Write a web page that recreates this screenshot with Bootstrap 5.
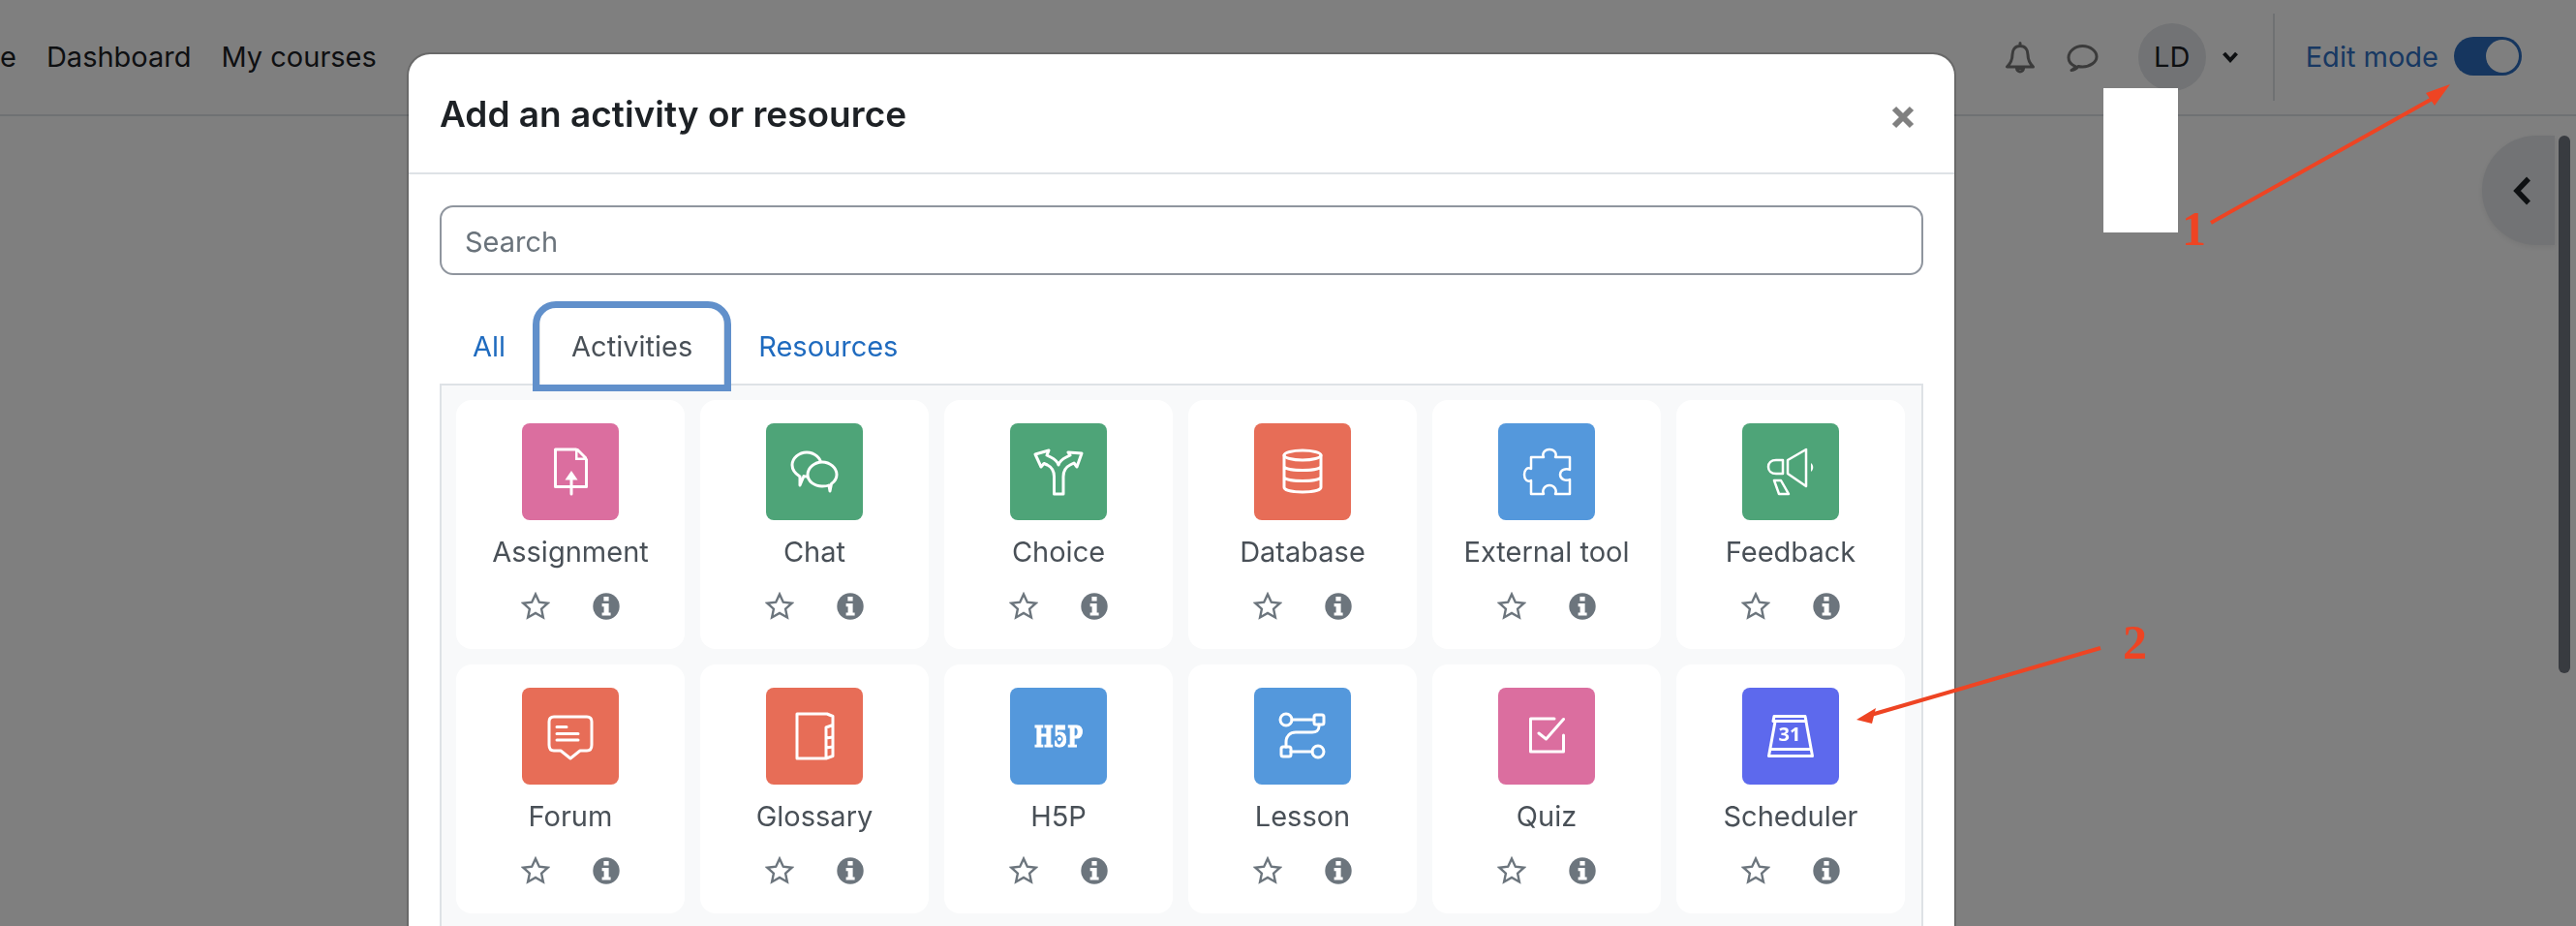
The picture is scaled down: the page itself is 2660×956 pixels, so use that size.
<!DOCTYPE html>
<html lang="en">
<head>
  <meta charset="UTF-8">
  <title>Add an activity or resource</title>
  <link href="https://cdn.jsdelivr.net/npm/bootstrap@5.3.0/dist/css/bootstrap.min.css" rel="stylesheet">
  <style>
    body {
      font-family: Inter, "Liberation Sans", sans-serif;
      font-size: 29px;
      color: #1d2125;
      background: #fff;
      overflow: hidden;
      height: 956px;
    }
    .top-bar {
      height: 120px;
      border-bottom: 2px solid #dee2e6;
    }
    .top-link { color: #1d2125; text-decoration: none; margin-right: 31px; }
    .top-tools { margin-right: 56px; }
    .top-icon { display: block; }
    .chat-icon { margin-left: 33px; }
    .user-pic {
      width: 70px;
      height: 70px;
      margin-left: 41px;
      border-radius: 50%;
      background: #e4e7ea;
    }
    .caret-icon { margin-left: 17px; }
    .bar-sep { width: 2px; height: 90px; margin-left: 36px; background: #dee2e6; }
    .edit-label { color: #3071c4; margin-left: 32px; }
    .edit-switch { margin-left: 16px; }
    .form-switch .edit-toggle {
      width: 70px;
      height: 40px;
      margin: 0;
      float: none;
      border: 0;
      background-color: #2c6cbe;
      background-image: url("data:image/svg+xml,%3csvg xmlns='http://www.w3.org/2000/svg' viewBox='-4 -4 8 8'%3e%3ccircle r='3.4' fill='%23fff'/%3e%3c/svg%3e");
    }
    .drawer-tab {
      position: absolute;
      left: 2563px;
      top: 140px;
      width: 75px;
      height: 113px;
      padding-left: 6px;
      background: #e4e7ea;
      border-radius: 56px 0 0 56px;
      box-shadow: 0 2px 6px rgba(0, 0, 0, .08);
    }
    .modal.d-block { overflow: hidden; }
    .add-dialog {
      width: 1600px;
      max-width: none;
      margin: 54px 0 0 420px;
    }
    .add-dialog .modal-content {
      border-width: 2px;
      border-radius: 24px;
    }
    .add-dialog .modal-header {
      height: 124px;
      padding: 0 32px;
      border-bottom: 2px solid #dee2e6;
    }
    .add-title { font-size: 37px; font-weight: 600; line-height: 1.2; margin: 2px 0 0; color: #1d2125; }
    .x-btn { border: 0; background: none; padding: 0; line-height: 0; margin: 7px 9px 0 0; }
    .add-dialog .modal-body { padding: 32px; height: 900px; }
    .search-box.form-control {
      height: 72px;
      border: 2px solid #8f959e;
      border-radius: 14px;
      font-size: 29px;
      padding: 2px 24px 0;
    }
    .search-box::placeholder { color: #6a737b; }
    .add-tabs { margin-top: 31px; border-bottom: 2px solid #dee2e6; padding-left: 0; }
    .add-tabs .nav-link {
      color: #1f6bbf;
      border: 2px solid transparent;
      border-bottom: 0;
      border-radius: 14px 14px 0 0;
      padding: 20px 32px 17px;
      line-height: 42px;
      margin: 0;
    }
    .add-tabs .nav-link.active { color: #495057; border-color: #dee2e6; background: #fff; margin-bottom: -2px; padding-bottom: 19px; }
    .add-pane {
      background: #f8f9fa;
      border: 2px solid #dee2e6;
      border-top: 0;
      padding: 15px 16px 16px 15px;
      display: grid;
      grid-template-columns: repeat(6, 236px);
      gap: 16px;
    }
    .mod-card {
      height: 257px;
      background: #fff;
      border-radius: 16px;
      padding-top: 24px;
      text-align: center;
    }
    .mod-tile {
      width: 100px;
      height: 100px;
      border-radius: 8px;
      margin: 0 auto;
      display: block;
    }
    .tile-pink { background: #db6e9f; }
    .tile-green { background: #4ea478; }
    .tile-red { background: #e76d57; }
    .tile-blue { background: #5498dc; }
    .tile-indigo { background: #5d69ed; }
    .mod-name { color: #495057; line-height: 42px; margin-top: 12px; }
    .mod-actions { margin-top: 20px; gap: 44px; height: 30px; }
    .line-w { fill: none; stroke: #fff; stroke-width: 3; stroke-linejoin: round; stroke-linecap: round; }
    .line-w.on-green { fill: #4ea478; }
    .line-w.thin { stroke-width: 2.5; }
    .marks {
      position: absolute;
      left: 0;
      top: 0;
      width: 2660px;
      height: 956px;
      z-index: 1060;
      pointer-events: none;
    }
    .mark-num { font-family: "Liberation Serif", serif; font-weight: 700; font-size: 50px; fill: #ee4423; }
    .redact {
      position: absolute;
      left: 2172px;
      top: 91px;
      width: 77px;
      height: 149px;
      background: #fff;
      z-index: 1060;
    }
    .tab-ring {
      position: absolute;
      left: 550px;
      top: 311px;
      width: 205px;
      height: 93px;
      border: 7px solid #6190cb;
      border-radius: 24px 24px 0 0;
      z-index: 1060;
    }
    .fake-scroll {
      position: absolute;
      left: 2642px;
      top: 140px;
      width: 12px;
      height: 555px;
      border-radius: 6px;
      background: #383b40;
      z-index: 1060;
    }
  </style>
</head>
<body>
  <svg width="0" height="0" class="d-block">
    <symbol id="ic-star" viewBox="0 0 30 30">
      <path d="M15 2.500l3.800 8.200 8.900 1-6.600 6 1.800 8.800-7.900-4.500-7.900 4.500 1.800-8.800-6.600-6 8.900-1z" fill="none" stroke="#6c757d" stroke-width="2.400"/>
    </symbol>
    <symbol id="ic-info" viewBox="0 0 28 28">
      <circle cx="14" cy="14" r="13.700" fill="#6c757d"/>
      <path d="M11.400 4h5.200v4.600h-5.200zM9.600 11h7v9.400h2v3.200H9.600v-3.200h2v-6.200h-2z" fill="#fff"/>
    </symbol>
  </svg>

  <!-- page under the backdrop -->
  <nav class="top-bar d-flex align-items-center">
    <a class="top-link" href="#">e</a>
    <a class="top-link" href="#">Dashboard</a>
    <a class="top-link" href="#">My courses</a>
    <div class="top-tools d-flex align-items-center ms-auto">
      <svg class="top-icon" width="30" height="33" viewBox="0 0 30 33"><path d="M15 1.500v3M15 4.500c-5.500 0-8 4-8 9 0 6-2 9-5.500 12.500h27C25 22.500 23 19.500 23 13.500c0-5-2.500-9-8-9zM11.500 27.500a3.500 3.500 0 0 0 7 0z" fill="none" stroke="#777" stroke-width="3" stroke-linejoin="round" stroke-linecap="round"/></svg>
      <svg class="top-icon chat-icon" width="33" height="29" viewBox="0 0 33 29"><path d="M5 27.500c2-1 3.500-2.500 4-4C4.500 21.500 2 18.500 2 14.500 2 8 8.500 2.500 16.500 2.500S31 8 31 13.500 24.500 24 16.500 24c-2 0-3 0-4.500-.5-1.500 2-4 3.500-7 4z" fill="none" stroke="#777" stroke-width="3" stroke-linejoin="round"/></svg>
      <div class="user-pic d-flex align-items-center justify-content-center">LD</div>
      <svg class="top-icon caret-icon" width="16" height="12" viewBox="0 0 16 12"><path d="M1.500 2l6.500 7 6.500-7" fill="none" stroke="#1d2125" stroke-width="4"/></svg>
      <div class="bar-sep"></div>
      <span class="edit-label">Edit mode</span>
      <div class="edit-switch form-check form-switch p-0 d-flex">
        <input class="form-check-input edit-toggle" type="checkbox" role="switch" checked>
      </div>
    </div>
  </nav>
  <div class="drawer-tab d-flex align-items-center justify-content-center">
    <svg width="20" height="30" viewBox="0 0 20 30"><path d="M17 2.500L5 15l12 12.500" fill="none" stroke="#1d2125" stroke-width="5.500"/></svg>
  </div>

  <div class="modal-backdrop fade show"></div>

  <div class="modal d-block" tabindex="-1">
    <div class="modal-dialog add-dialog">
      <div class="modal-content">
        <div class="modal-header">
          <h5 class="add-title">Add an activity or resource</h5>
          <button type="button" class="x-btn ms-auto" aria-label="Close">
            <svg width="24" height="24" viewBox="0 0 24 24"><path d="M3 3l18 18M21 3L3 21" stroke="#808080" stroke-width="6"/></svg>
          </button>
        </div>
        <div class="modal-body">
          <input type="text" class="form-control search-box" placeholder="Search">
          <ul class="nav nav-tabs add-tabs">
            <li class="nav-item"><a class="nav-link" href="#">All</a></li>
            <li class="nav-item"><a class="nav-link active" href="#">Activities</a></li>
            <li class="nav-item"><a class="nav-link" href="#">Resources</a></li>
          </ul>
          <div class="add-pane">

            <div class="mod-card">
              <svg class="mod-tile tile-pink" viewBox="0 0 100 100">
                <path class="line-w" d="M34.500 27H56l10.500 10.500V65.500H34.500z"/>
                <path d="M55 26h3l9 9v3H55z" fill="#fff"/><path d="M57.500 29.500v6h6z" fill="#db6e9f"/>
                <path class="line-w" d="M51 58v15"/><path d="M51 49l6.500 9.500h-13z" fill="#fff"/>
              </svg>
              <div class="mod-name">Assignment</div>
              <div class="mod-actions d-flex justify-content-center align-items-center">
                <svg width="30" height="30"><use href="#ic-star"/></svg><svg width="28" height="28"><use href="#ic-info"/></svg>
              </div>
            </div>

            <div class="mod-card">
              <svg class="mod-tile tile-green" viewBox="0 0 100 100">
                <path class="line-w" d="M35 64v-9c-4-2.500-8-6-8-12 0-7 7-13 15-13s15 6 15 13-7 12-15 12c-1 0-2 0-3-.5z"/>
                <path class="line-w on-green" d="M66 70l-1-6c-1 .5-4 1-7 1-8 0-15-5-15-12s7-13 15-13 15 6 15 13c0 4-2 7-5.500 9.500z"/>
              </svg>
              <div class="mod-name">Chat</div>
              <div class="mod-actions d-flex justify-content-center align-items-center">
                <svg width="30" height="30"><use href="#ic-star"/></svg><svg width="28" height="28"><use href="#ic-info"/></svg>
              </div>
            </div>

            <div class="mod-card">
              <svg class="mod-tile tile-green" viewBox="0 0 100 100">
                <path class="line-w" d="M45.500 73V55c0-7-3-10-7-12l-3.500-1.500L32 45l-6-13 14-4-2 5 4 2c4 2 7 5 8 8 1-3 4-6 8-8l4-2-2-3 14 1-5 14-3-4-4 2c-4 2-7 5-7 12v18z"/>
              </svg>
              <div class="mod-name">Choice</div>
              <div class="mod-actions d-flex justify-content-center align-items-center">
                <svg width="30" height="30"><use href="#ic-star"/></svg><svg width="28" height="28"><use href="#ic-info"/></svg>
              </div>
            </div>

            <div class="mod-card">
              <svg class="mod-tile tile-red" viewBox="0 0 100 100">
                <ellipse class="line-w" cx="50" cy="33" rx="19" ry="5"/>
                <path class="line-w" d="M31 33v33c0 6.500 38 6.500 38 0V33M31 44c0 6 38 6 38 0M31 55c0 6 38 6 38 0"/>
              </svg>
              <div class="mod-name">Database</div>
              <div class="mod-actions d-flex justify-content-center align-items-center">
                <svg width="30" height="30"><use href="#ic-star"/></svg><svg width="28" height="28"><use href="#ic-info"/></svg>
              </div>
            </div>

            <div class="mod-card">
              <svg class="mod-tile tile-blue" viewBox="0 0 100 100">
                <path class="line-w thin" d="M34 35h13c-2-4 1-8 6-8s8 4 6 8h15v13c-4-2-10 0-10 5s6 7 10 5v15H59c2-4-1-9-6-9s-8 5-6 9H34V59c-4 2-7-1-7-6s3-8 7-6z"/>
              </svg>
              <div class="mod-name">External tool</div>
              <div class="mod-actions d-flex justify-content-center align-items-center">
                <svg width="30" height="30"><use href="#ic-star"/></svg><svg width="28" height="28"><use href="#ic-info"/></svg>
              </div>
            </div>

            <div class="mod-card">
              <svg class="mod-tile tile-green" viewBox="0 0 100 100">
                <path class="line-w thin" d="M42 38h-7c-5 0-8 3-8 7s3 7 8 7h7zM47 38l19-11v38L47 52zM33 59h7l8 14H38z"/>
                <path d="M71 41c3 2 3 7 0 9z" fill="#fff"/>
              </svg>
              <div class="mod-name">Feedback</div>
              <div class="mod-actions d-flex justify-content-center align-items-center">
                <svg width="30" height="30"><use href="#ic-star"/></svg><svg width="28" height="28"><use href="#ic-info"/></svg>
              </div>
            </div>

            <div class="mod-card">
              <svg class="mod-tile tile-red" viewBox="0 0 100 100">
                <path class="line-w" d="M33 30h34q5 0 5 5v24q0 6-5 6h-7l-10 8-10-8h-7q-5 0-5-6V35q0-5 5-5z"/>
                <path class="line-w" d="M36 40.500h10M36 47.500h22M36 54h22"/>
              </svg>
              <div class="mod-name">Forum</div>
              <div class="mod-actions d-flex justify-content-center align-items-center">
                <svg width="30" height="30"><use href="#ic-star"/></svg><svg width="28" height="28"><use href="#ic-info"/></svg>
              </div>
            </div>

            <div class="mod-card">
              <svg class="mod-tile tile-red" viewBox="0 0 100 100">
                <path class="line-w" d="M32 27h31l6 2.500v9L62 41v32H32zM62 73l7-2.500v-32M62 52l7-1M62 62l7-1"/>
              </svg>
              <div class="mod-name">Glossary</div>
              <div class="mod-actions d-flex justify-content-center align-items-center">
                <svg width="30" height="30"><use href="#ic-star"/></svg><svg width="28" height="28"><use href="#ic-info"/></svg>
              </div>
            </div>

            <div class="mod-card">
              <svg class="mod-tile tile-blue" viewBox="0 0 100 100">
                <text x="25" y="61" font-family="DejaVu Serif" font-weight="700" font-size="30" fill="#fff" stroke="#fff" stroke-width="1.200" textLength="50" lengthAdjust="spacingAndGlyphs">H5P</text>
                <circle cx="51" cy="53" r="2.800" fill="#fff" stroke="#5498dc" stroke-width="1.500"/>
              </svg>
              <div class="mod-name">H5P</div>
              <div class="mod-actions d-flex justify-content-center align-items-center">
                <svg width="30" height="30"><use href="#ic-star"/></svg><svg width="28" height="28"><use href="#ic-info"/></svg>
              </div>
            </div>

            <div class="mod-card">
              <svg class="mod-tile tile-blue" viewBox="0 0 100 100">
                <circle class="line-w" cx="33" cy="33" r="6"/>
                <rect class="line-w" x="62" y="28" width="10" height="10" rx="2"/>
                <rect class="line-w" x="28" y="61" width="10" height="10" rx="2"/>
                <circle class="line-w" cx="66" cy="66" r="6"/>
                <path class="line-w" d="M39 33h23M38 66h22M67 38v2c0 4-3 6-7 6H43c-6 0-10 4-10 10v5"/>
              </svg>
              <div class="mod-name">Lesson</div>
              <div class="mod-actions d-flex justify-content-center align-items-center">
                <svg width="30" height="30"><use href="#ic-star"/></svg><svg width="28" height="28"><use href="#ic-info"/></svg>
              </div>
            </div>

            <div class="mod-card">
              <svg class="mod-tile tile-pink" viewBox="0 0 100 100">
                <path class="line-w" d="M58 32H33.500v34H67.500V49M42 47l7.500 6L67.500 32.500"/>
              </svg>
              <div class="mod-name">Quiz</div>
              <div class="mod-actions d-flex justify-content-center align-items-center">
                <svg width="30" height="30"><use href="#ic-star"/></svg><svg width="28" height="28"><use href="#ic-info"/></svg>
              </div>
            </div>

            <div class="mod-card">
              <svg class="mod-tile tile-indigo" viewBox="0 0 100 100">
                <path class="line-w" d="M33 29.500h32l1 5H32zM34 35l-6.500 35.500h45L66 35M29 63.500h42"/>
                <text x="49" y="54.500" text-anchor="middle" font-family="Open Sans" font-weight="700" font-size="20" fill="#fff">31</text>
              </svg>
              <div class="mod-name">Scheduler</div>
              <div class="mod-actions d-flex justify-content-center align-items-center">
                <svg width="30" height="30"><use href="#ic-star"/></svg><svg width="28" height="28"><use href="#ic-info"/></svg>
              </div>
            </div>

          </div>
        </div>
      </div>
    </div>
  </div>

  <!-- markup drawn on top of the screenshot -->
  <div class="fake-scroll"></div>
  <div class="tab-ring"></div>
  <div class="redact"></div>
  <svg class="marks" viewBox="0 0 2660 956">
    <path d="M2283 230L2515 100" stroke="#ee4423" stroke-width="4" fill="none"/>
    <path d="M2530 87L2514 109 2505 96z" fill="#ee4423"/>
    <text class="mark-num" x="2253" y="253">1</text>
    <path d="M2169 669L1932 738" stroke="#ee4423" stroke-width="4" fill="none"/>
    <path d="M1917 743L1937 731 1933 747z" fill="#ee4423"/>
    <text class="mark-num" x="2192" y="680">2</text>
  </svg>

  <script src="https://cdn.jsdelivr.net/npm/bootstrap@5.3.0/dist/js/bootstrap.bundle.min.js"></script>
</body>
</html>
